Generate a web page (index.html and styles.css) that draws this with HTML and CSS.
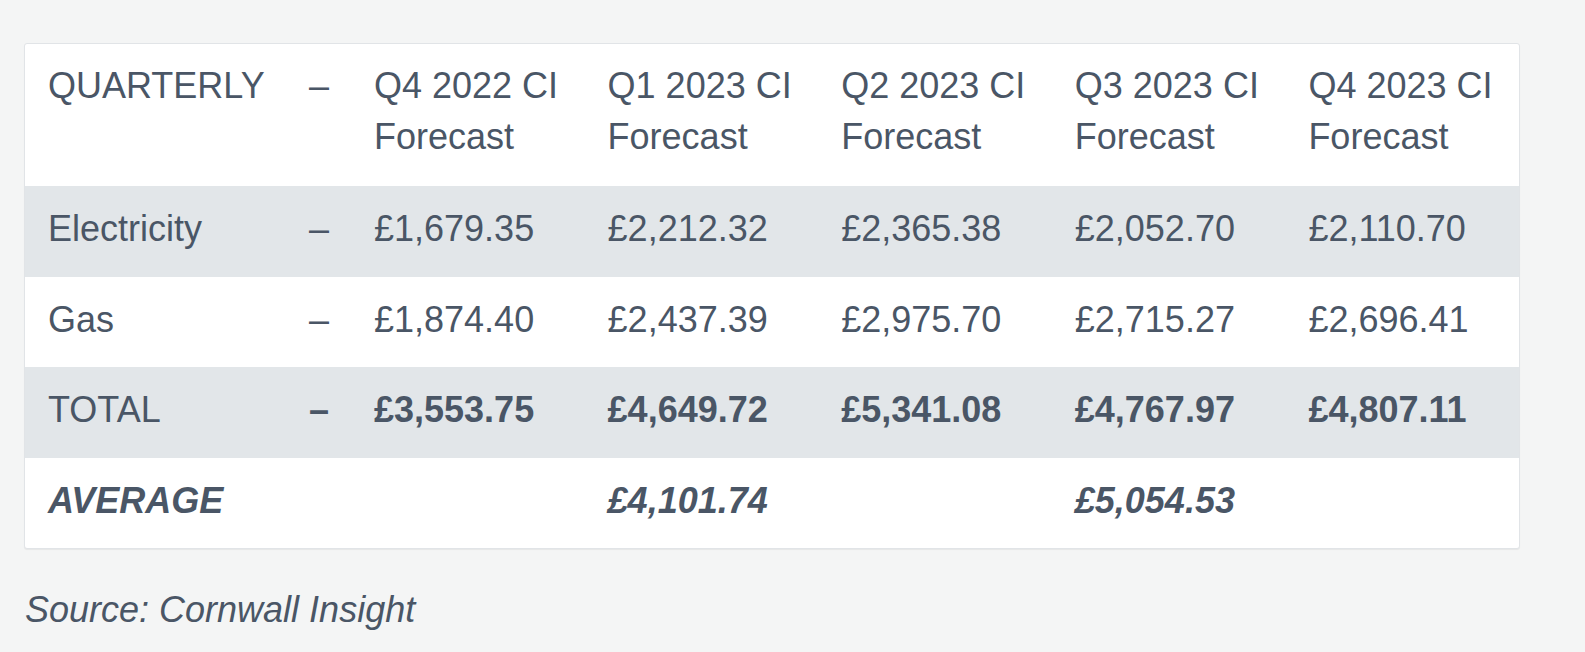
FILE: index.html
```html
<!DOCTYPE html>
<html lang="en">
<head>
<meta charset="utf-8">
<title>Quarterly CI Forecast</title>
<link rel="stylesheet" href="styles.css">
</head>
<body>
<main class="page">
  <div class="table-card">
    <table class="forecast">
      <colgroup>
        <col class="c-label">
        <col class="c-dash">
        <col class="c-q"><col class="c-q"><col class="c-q"><col class="c-q"><col class="c-q">
      </colgroup>
      <thead>
        <tr>
          <th>QUARTERLY</th>
          <th>–</th>
          <th>Q4 2022 CI Forecast</th>
          <th>Q1 2023 CI Forecast</th>
          <th>Q2 2023 CI Forecast</th>
          <th>Q3 2023 CI Forecast</th>
          <th>Q4 2023 CI Forecast</th>
        </tr>
      </thead>
      <tbody>
        <tr class="striped">
          <td>Electricity</td>
          <td>–</td>
          <td>£1,679.35</td>
          <td>£2,212.32</td>
          <td>£2,365.38</td>
          <td>£2,052.70</td>
          <td>£2,110.70</td>
        </tr>
        <tr>
          <td>Gas</td>
          <td>–</td>
          <td>£1,874.40</td>
          <td>£2,437.39</td>
          <td>£2,975.70</td>
          <td>£2,715.27</td>
          <td>£2,696.41</td>
        </tr>
        <tr class="striped total">
          <td>TOTAL</td>
          <td class="strong">–</td>
          <td class="strong">£3,553.75</td>
          <td class="strong">£4,649.72</td>
          <td class="strong">£5,341.08</td>
          <td class="strong">£4,767.97</td>
          <td class="strong">£4,807.11</td>
        </tr>
        <tr class="average">
          <td class="em">AVERAGE</td>
          <td></td>
          <td></td>
          <td class="em">£4,101.74</td>
          <td></td>
          <td class="em">£5,054.53</td>
          <td></td>
        </tr>
      </tbody>
    </table>
  </div>
  <p class="source">Source: Cornwall Insight</p>
</main>
</body>
</html>
```
FILE: styles.css
```css
html, body {
  margin: 0;
  padding: 0;
  background: #f4f5f5;
}

body {
  font-family: "Liberation Sans", Arial, sans-serif;
  color: #4a5666;
}

.page {
  padding: 43px 0 0 24px;
}

.table-card {
  width: 1494px;
  background: #ffffff;
  border: 1px solid #e1e4e7;
  border-radius: 3px;
  box-shadow: 0 1px 1px rgba(0, 0, 0, 0.06);
  overflow: hidden;
}

.forecast {
  width: 1494px;
  table-layout: fixed;
  border-collapse: collapse;
  border-spacing: 0;
  font-size: 36px;
  line-height: 51px;
}

.c-label { width: 261px; }
.c-dash { width: 65px; }
.c-q { width: 233.6px; }

.forecast th,
.forecast td {
  text-align: left;
  vertical-align: top;
  font-weight: normal;
  padding: 17px 8px 22.5px 23px;
}

.forecast thead th {
  padding-top: 16px;
  padding-bottom: 24px;
}

.forecast tr.striped td {
  background: #e2e6e9;
}

.forecast td.strong {
  font-weight: bold;
}

.forecast td.em {
  font-weight: bold;
  font-style: italic;
}

.source {
  margin: 35px 0 0 1px;
  font-size: 36px;
  line-height: 51px;
  font-style: italic;
}
```
